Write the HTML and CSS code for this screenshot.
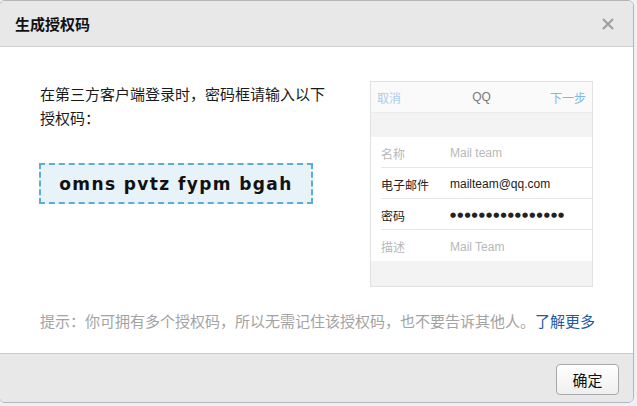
FILE: index.html
```html
<!DOCTYPE html>
<html lang="zh-CN">
<head>
<meta charset="utf-8">
<title>生成授权码</title>
<link rel="stylesheet" href="styles.css">
</head>
<body>
<div class="dialog">
  <div class="dlg-head">
    <span class="dlg-title">生成授权码</span>
    <svg class="dlg-close" width="12" height="12" viewBox="0 0 12 12"><path d="M1 1L11 11M11 1L1 11" stroke="#a0a0a0" stroke-width="2.2" stroke-linecap="butt"/></svg>
  </div>
  <div class="dlg-body">
    <div class="main-row">
      <div class="left-col">
        <p class="intro">在第三方客户端登录时，密码框请输入以下授权码：</p>
        <div class="code-box">omns pvtz fypm bgah</div>
      </div>
      <div class="phone">
        <div class="ph-nav">
          <span class="ph-cancel">取消</span>
          <span class="ph-title">QQ</span>
          <span class="ph-next">下一步</span>
        </div>
        <div class="ph-band"></div>
        <div class="ph-rows">
          <div class="ph-row"><span class="ph-label muted">名称</span><span class="ph-val muted">Mail team</span></div>
          <div class="ph-row"><span class="ph-label">电子邮件</span><span class="ph-val">mailteam@qq.com</span></div>
          <div class="ph-row"><span class="ph-label">密码</span><span class="ph-val dots">●●●●●●●●●●●●●●●●</span></div>
          <div class="ph-row last"><span class="ph-label muted">描述</span><span class="ph-val muted">Mail Team</span></div>
        </div>
        <div class="ph-band bottom"></div>
      </div>
    </div>
    <p class="hint">提示：你可拥有多个授权码，所以无需记住该授权码，也不要告诉其他人。<a class="more" href="#">了解更多</a></p>
  </div>
  <div class="dlg-foot">
    <button class="btn-ok">确定</button>
  </div>
</div>
</body>
</html>
```

FILE: styles.css
```css
* { box-sizing: border-box; }
html, body { margin: 0; padding: 0; }
body {
  background: #edf1f5;
  width: 637px;
  height: 406px;
  overflow: hidden;
  font-family: "Noto Sans CJK SC", "Noto Sans", sans-serif;
}
.dialog {
  margin-left: -1px;
  width: 635px;
  height: 403px;
  border: 1px solid #b5b5b5;
  border-radius: 6px;
  background: #fff;
  overflow: hidden;
  display: flex;
  flex-direction: column;
}
.dlg-head {
  height: 46px;
  flex: none;
  background: #e8e8e8;
  border-bottom: 1px solid #cfcfcf;
  display: flex;
  align-items: center;
  justify-content: space-between;
  padding: 0 19px 0 15px;
}
.dlg-title {
  font-size: 15px;
  font-weight: bold;
  color: #111;
  line-height: 20px;
}
.dlg-close { display: block; margin-top: 1px; }
.dlg-body {
  flex: 1;
  padding: 35px 0 0 40px;
}
.main-row {
  display: flex;
  align-items: flex-start;
}
.left-col {
  width: 330px;
  flex: none;
}
.intro {
  margin: 0;
  width: 290px;
  font-size: 15px;
  line-height: 24px;
  color: #1a1a1a;
}
.code-box {
  margin: 33px 0 0 -1px;
  width: 274px;
  height: 41px;
  border: 2px dashed #5aaed8;
  background: #e8f2f9;
  display: flex;
  align-items: center;
  justify-content: center;
  font-family: "DejaVu Sans", sans-serif;
  font-weight: bold;
  font-size: 17px;
  letter-spacing: 1.4px;
  color: #111;
  padding-top: 1px;
}
.phone {
  width: 223px;
  height: 206px;
  border: 1px solid #e2e2e2;
  background: #fff;
  display: flex;
  flex-direction: column;
  font-family: "Liberation Sans", "Noto Sans CJK SC", sans-serif;
  font-size: 12px;
  margin-top: -1px;
}
.ph-nav {
  height: 31px;
  flex: none;
  background: #fafafa;
  border-bottom: 1px solid #ececec;
  display: flex;
  align-items: center;
  justify-content: space-between;
  padding: 0 6px 0 6px;
  font-family: "Noto Sans CJK SC", sans-serif;
}
.ph-cancel { color: #a9cdf0; width: 50px; }
.ph-title { color: #777; font-family: "Liberation Sans", sans-serif; font-size: 12px; }
.ph-next { color: #7fb7ea; width: 50px; text-align: right; }
.ph-band {
  height: 24px;
  flex: none;
  background: #f3f3f3;
}
.ph-band.bottom { flex: 1; height: auto; }
.ph-rows {
  flex: none;
  padding-left: 10px;
  background: #fff;
}
.ph-row {
  height: 31px;
  display: flex;
  align-items: center;
  padding-top: 2px;
  border-bottom: 1px solid #e6e6e6;
}
.ph-row.last { border-bottom: none; }
.ph-label {
  width: 69px;
  flex: none;
  color: #222;
  font-family: "Noto Sans CJK SC", sans-serif;
  font-size: 12px;
}
.ph-val { color: #222; font-size: 12px; }
.muted { color: #b8b8b8 !important; }
.dots {
  font-family: "DejaVu Sans", sans-serif;
  font-size: 7px;
  letter-spacing: 1.1px;
}
.hint {
  margin: 22px 0 0 0;
  font-size: 15px;
  line-height: 24px;
  color: #a3a3a3;
}
.more { color: #1d5ba3; text-decoration: none; }
.dlg-foot {
  height: 49px;
  flex: none;
  background: #e8e8e8;
  border-top: 1px solid #cbcbcb;
  display: flex;
  justify-content: flex-end;
  align-items: flex-start;
  padding: 10px 14px 0 0;
}
.btn-ok {
  width: 63px;
  height: 31px;
  border: 1px solid #a8a8a8;
  border-radius: 4px;
  background: linear-gradient(#ffffff, #efefef);
  font-family: "Noto Sans CJK SC", sans-serif;
  font-size: 15px;
  color: #111;
  padding: 0;
  line-height: 29px;
}
```
